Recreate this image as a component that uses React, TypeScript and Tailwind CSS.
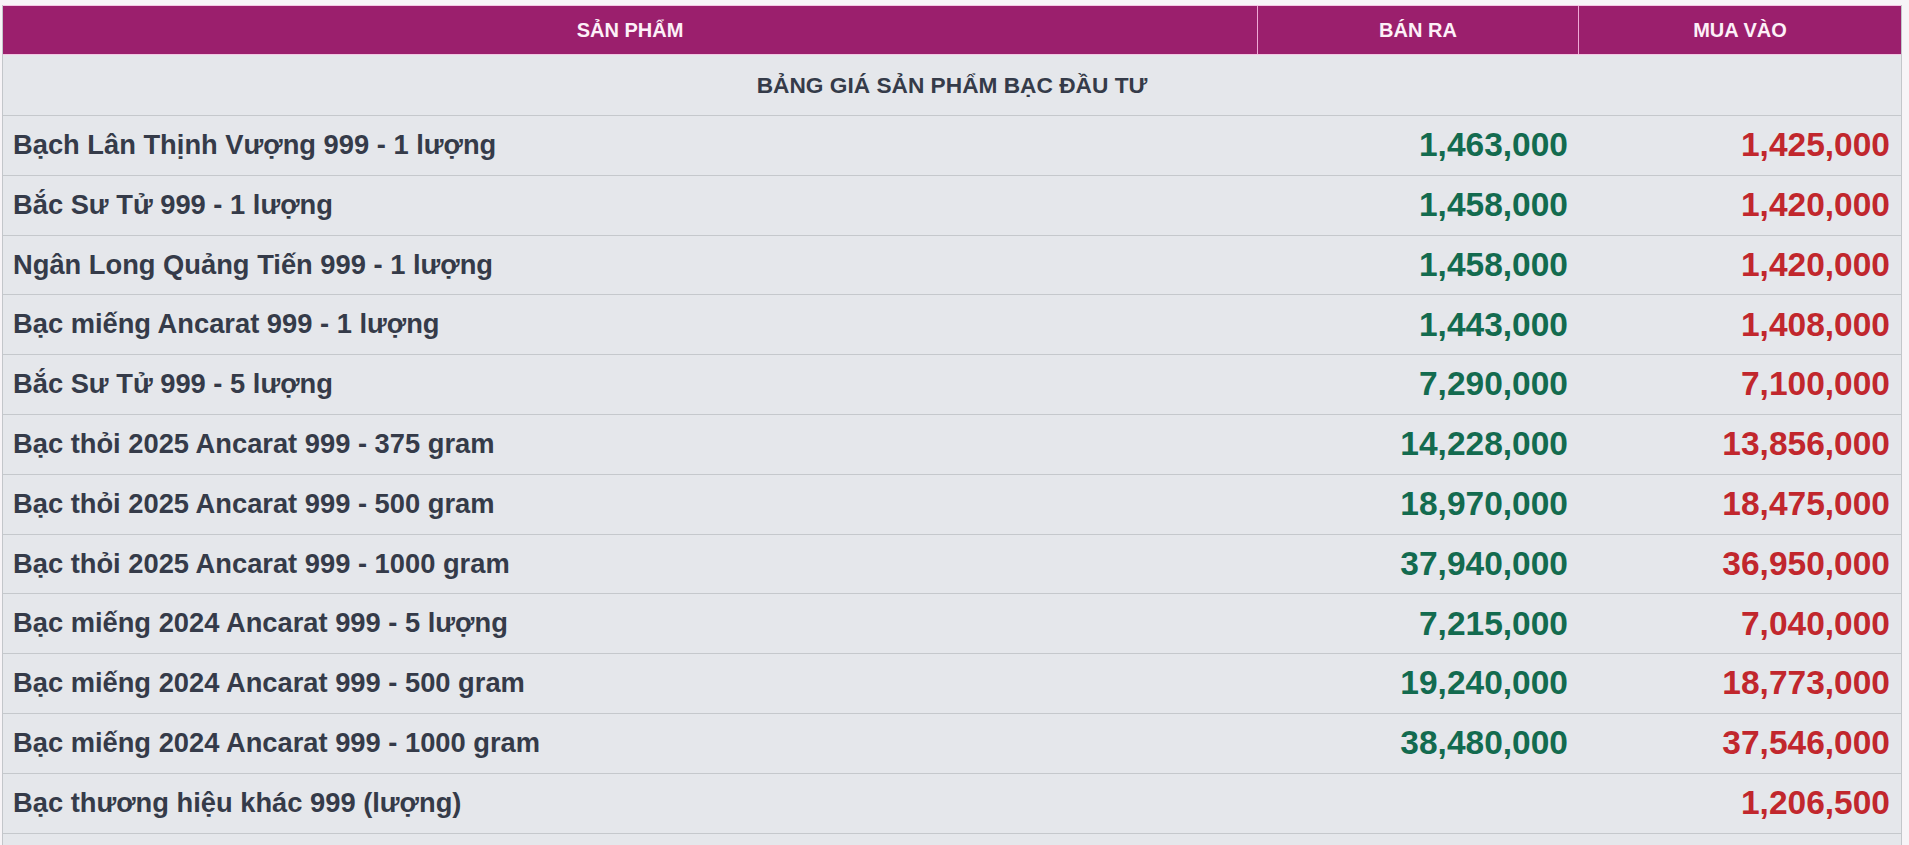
import React from 'react'

interface PriceRow {
  name: string
  sell: string
  buy: string
}

const rows: PriceRow[] = [
  { name: 'Bạch Lân Thịnh Vượng 999 - 1 lượng', sell: '1,463,000', buy: '1,425,000' },
  { name: 'Bắc Sư Tử 999 - 1 lượng', sell: '1,458,000', buy: '1,420,000' },
  { name: 'Ngân Long Quảng Tiến 999 - 1 lượng', sell: '1,458,000', buy: '1,420,000' },
  { name: 'Bạc miếng Ancarat 999 - 1 lượng', sell: '1,443,000', buy: '1,408,000' },
  { name: 'Bắc Sư Tử 999 - 5 lượng', sell: '7,290,000', buy: '7,100,000' },
  { name: 'Bạc thỏi 2025 Ancarat 999 - 375 gram', sell: '14,228,000', buy: '13,856,000' },
  { name: 'Bạc thỏi 2025 Ancarat 999 - 500 gram', sell: '18,970,000', buy: '18,475,000' },
  { name: 'Bạc thỏi 2025 Ancarat 999 - 1000 gram', sell: '37,940,000', buy: '36,950,000' },
  { name: 'Bạc miếng 2024 Ancarat 999 - 5 lượng', sell: '7,215,000', buy: '7,040,000' },
  { name: 'Bạc miếng 2024 Ancarat 999 - 500 gram', sell: '19,240,000', buy: '18,773,000' },
  { name: 'Bạc miếng 2024 Ancarat 999 - 1000 gram', sell: '38,480,000', buy: '37,546,000' },
  { name: 'Bạc thương hiệu khác 999 (lượng)', sell: '', buy: '1,206,500' },
]

export default function App() {
  return (
    <div
      className="h-[845px] overflow-hidden bg-[#f7f4f7] pt-[5px] pl-[2px]"
      style={{ fontFamily: '"Liberation Sans", Arial, sans-serif' }}
    >
      <div className="w-[1900px] border-x border-[#c3c6ca] bg-[#e5e7eb]">
        {/* tiêu đề bảng */}
        <div className="flex h-[50px] border-y border-[#f3c6e3] bg-[#9b1f6d] text-[20px] font-bold text-[#fdf0f8]">
          <div className="flex w-[1255px] items-center justify-center border-r border-[#efa9d6]">SẢN PHẨM</div>
          <div className="flex w-[321px] items-center justify-center border-r border-[#efa9d6]">BÁN RA</div>
          <div className="flex flex-1 items-center justify-center">MUA VÀO</div>
        </div>

        <div className="flex h-[61px] items-center justify-center border-b border-[#c5c8cc] text-[22.7px] font-bold text-[#353b49]">
          BẢNG GIÁ SẢN PHẨM BẠC ĐẦU TƯ
        </div>

        {rows.map((row, i) => (
          <div key={i} className="flex h-[59.8px] items-center border-b border-[#c5c8cc]">
            <div className="w-[1255px] pl-[10px] text-[27.3px] font-bold text-[#353b49]">{row.name}</div>
            <div className="w-[321px] pr-[11px] text-right text-[33.5px] font-bold text-[#136b4f]">{row.sell}</div>
            <div className="flex-1 pr-[11px] text-right text-[33.5px] font-bold text-[#c1272d]">{row.buy}</div>
          </div>
        ))}

        {/* hàng tiếp theo bị cắt */}
        <div className="h-[60px]" />
      </div>
    </div>
  )
}
